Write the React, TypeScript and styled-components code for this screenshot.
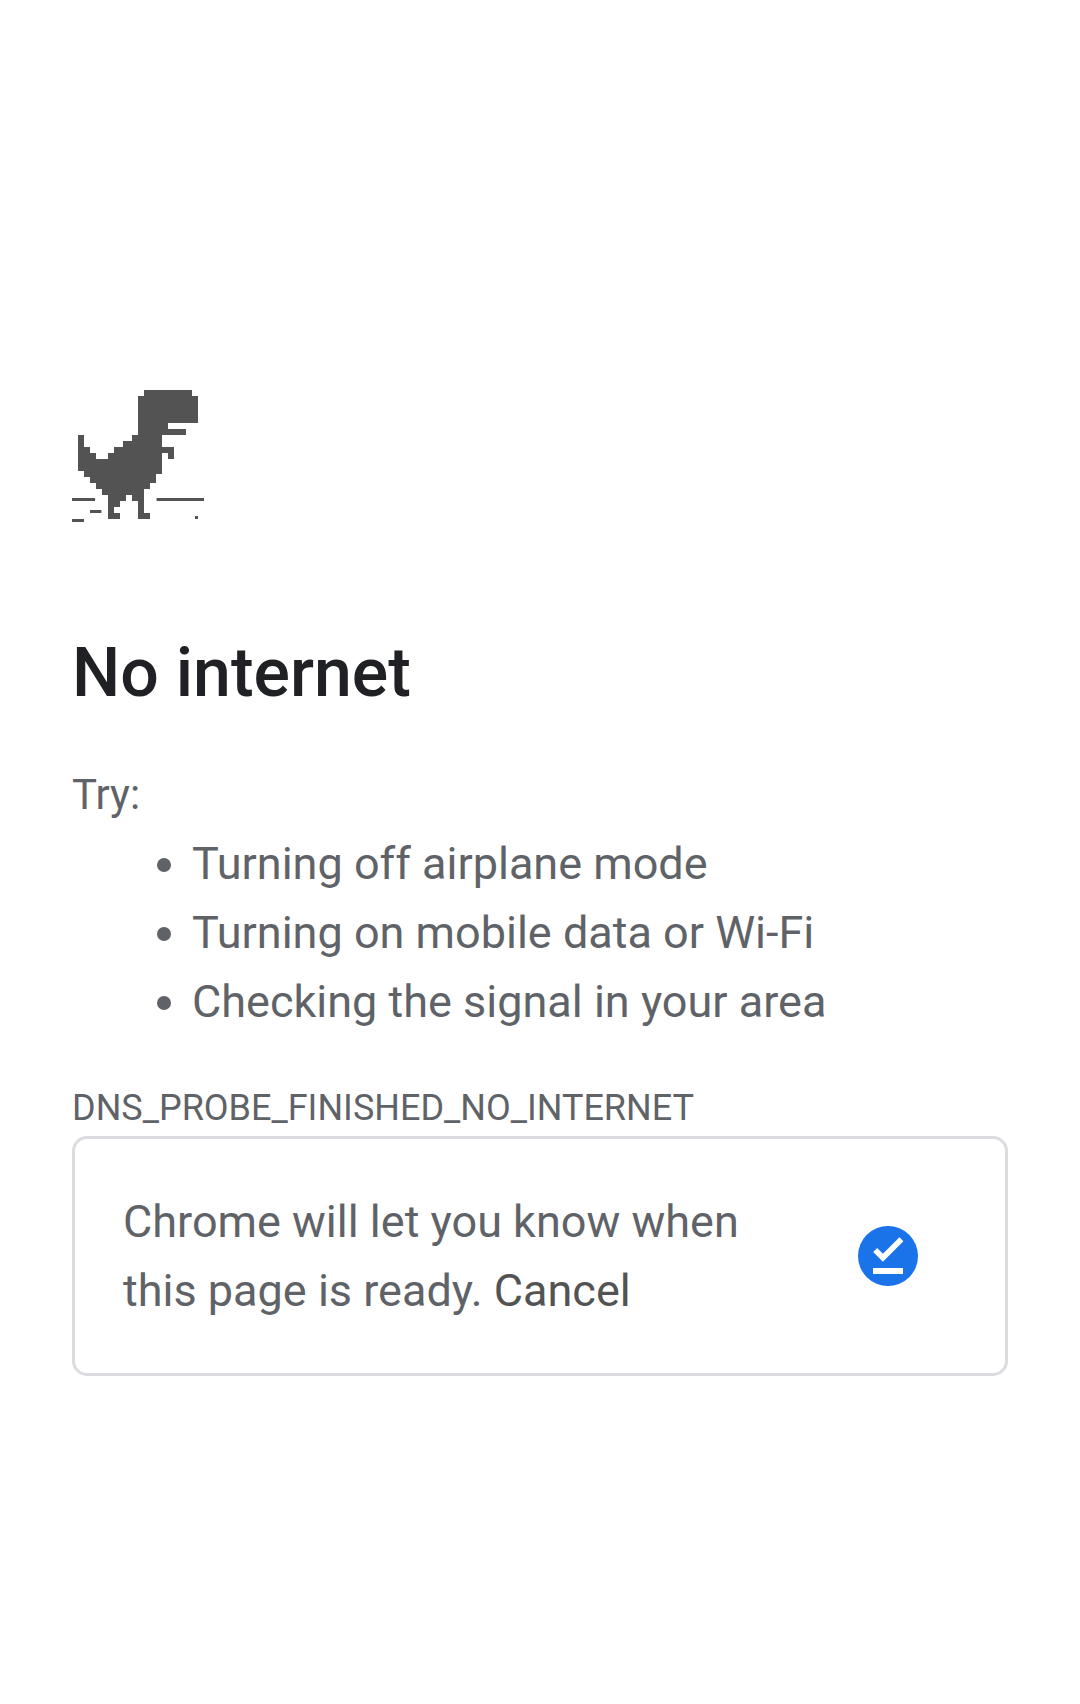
import React from "react";
import styled, { createGlobalStyle } from "styled-components";

const GlobalStyle = createGlobalStyle`
  body {
    margin: 0;
    background: #ffffff;
    color: #5f6368;
    font-family: Roboto, "Noto Sans", sans-serif;
    font-size: 45px;
    line-height: 69px;
  }
`;

const Page = styled.main`
  padding: 390px 72px 72px;
`;

const Dino = styled.svg`
  display: block;
  width: 132px;
  height: 132px;
  fill: #535353;
`;

const Title = styled.h1`
  margin: 112px 0 48px;
  color: #202124;
  font-size: 68px;
  font-weight: 500;
  line-height: 78px;
`;

const Hint = styled.p`
  margin: 0;
  font-size: 42px;
`;

const Suggestions = styled.ul`
  margin: 0 0 44px;
  padding: 0 0 0 120px;
`;

const ErrorCode = styled.p`
  margin: 0;
  font-size: 36px;
  line-height: 56px;
`;

const Notice = styled.section`
  display: flex;
  align-items: center;
  gap: 48px;
  padding: 48px 87px 48px 48px;
  border: 3px solid #dadce0;
  border-radius: 15px;
`;

const NoticeText = styled.p`
  flex: 1;
  margin: 0;
`;

const CancelButton = styled.button`
  padding: 0;
  border: 0;
  background: none;
  color: #535353;
  font: inherit;
  cursor: pointer;
`;

const DoneIcon = styled.svg`
  flex: none;
  width: 60px;
  height: 60px;
`;

const suggestions = [
  "Turning off airplane mode",
  "Turning on mobile data or Wi-Fi",
  "Checking the signal in your area",
];

export default function App() {
  return (
    <>
      <GlobalStyle />
      <Page>
        <Dino viewBox="0 0 44 44" aria-hidden="true">
          <path d="M24 0H40V2H42V11H32V13H38V15H30V19H34V23H32V21H30V28H28V31H26V33H24V41H26V43H22V37H20V35H18V37H16V39H14V41H16V43H12V35H10V33H8V31H6V29H4V27H2V15H4V19H6V21H8V23H12V21H14V19H17V17H20V15H22V2H24Z" />
          <path d="M0 36H7.7V37H0ZM28.2 36H44V37H28.2ZM6 40H9.8V41H6ZM0 43H4V44H0ZM41 42H42V43H41Z" />
        </Dino>
        <Title>No internet</Title>
        <Hint>Try:</Hint>
        <Suggestions>
          {suggestions.map((text) => (
            <li key={text}>{text}</li>
          ))}
        </Suggestions>
        <ErrorCode>DNS_PROBE_FINISHED_NO_INTERNET</ErrorCode>
        <Notice>
          <NoticeText>
            Chrome will let you know when this page is ready.{" "}
            <CancelButton type="button">Cancel</CancelButton>
          </NoticeText>
          <DoneIcon viewBox="0 0 60 60" aria-hidden="true">
            <circle cx="30" cy="30" r="30" fill="#1a73e8" />
            <path d="M17.2 24L24.9 31.8L43.4 13.3" fill="none" stroke="#ffffff" strokeWidth="5.6" />
            <path d="M15 42H45V48H15Z" fill="#ffffff" />
          </DoneIcon>
        </Notice>
      </Page>
    </>
  );
}
